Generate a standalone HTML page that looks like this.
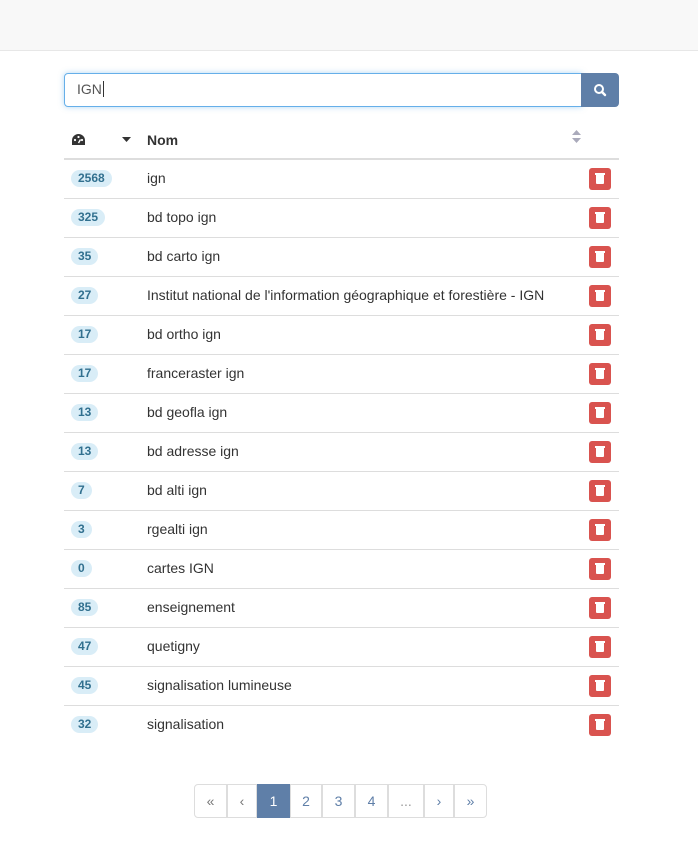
<!DOCTYPE html>
<html><head><meta charset="utf-8"><style>
*{box-sizing:border-box}
body{margin:0;width:698px;height:844px;background:#fff;font-family:"Liberation Sans",sans-serif;font-size:14px;color:#333;position:relative;overflow:hidden}
.hdr{position:absolute;left:0;top:0;width:698px;height:51px;background:#f8f8f8;border-bottom:1px solid #e7e7e7}
.inp{position:absolute;left:64px;top:73px;width:518px;height:34px;border:1px solid #66afe9;border-radius:4px 0 0 4px;box-shadow:0 0 6px rgba(102,175,233,.5);padding:7px 12px;font-size:14px;color:#555}
.btn{position:absolute;left:581px;top:73px;width:38px;height:34px;background:#5f7fa8;border-radius:0 4px 4px 0}
.th{position:absolute;left:64px;top:122px;width:555px;height:38px;border-bottom:2px solid #ddd}
.row{position:absolute;left:64px;width:555px;height:39px;border-bottom:1px solid #ddd}
.badge{position:absolute;left:7px;top:10px;height:17px;line-height:17px;padding:0 7px;border-radius:9px;background:#d9edf7;color:#31708f;font-weight:bold;font-size:12px}
.nm{position:absolute;left:83px;top:10px}
.tr{position:absolute;left:525px;top:8px;width:22px;height:22px;background:#d9534f;border-radius:3px}
.pg{position:absolute;top:784px;height:34px;border:1px solid #ddd;margin-left:-1px;text-align:center;line-height:32px;color:#5f7fa8;background:#fff}
.tr::after{content:"";position:absolute;left:7px;top:7px;width:8px;height:9px;background:#fff;border-radius:0 0 1px 1px}.tr::before{content:"";position:absolute;left:6px;top:5px;width:10px;height:2px;background:#fff}
</style></head><body>
<div class="hdr"></div>
<div class="inp">IGN<span style="border-left:1px solid #333;margin-left:1px"></span></div>
<div class="btn"><svg width="38" height="34" viewBox="0 0 38 34"><circle cx="18" cy="16" r="4" fill="none" stroke="#fff" stroke-width="2"/><line x1="21" y1="19" x2="24" y2="22" stroke="#fff" stroke-width="2.4" stroke-linecap="round"/></svg></div>
<div class="th">
<svg style="position:absolute;left:7px;top:11px" width="15" height="14" viewBox="0 0 15 14"><path d="M7.5 1A6.5 6.5 0 0 0 1 7.5V12h13V7.5A6.5 6.5 0 0 0 7.5 1z" fill="#333"/><circle cx="4" cy="7" r="1.1" fill="#fff"/><circle cx="7.5" cy="4" r="1.1" fill="#fff"/><circle cx="11" cy="7" r="1.1" fill="#fff"/><path d="M7.5 10l2-3.5" stroke="#fff" stroke-width="1.4"/></svg>
<svg style="position:absolute;left:58px;top:15px" width="9" height="5"><path d="M0 0h9L4.5 5z" fill="#333"/></svg>
<span style="position:absolute;left:83px;top:10px;font-weight:bold">Nom</span>
<svg style="position:absolute;left:508px;top:8px" width="9" height="13"><path d="M0 5h9L4.5 0zM0 8h9L4.5 13z" fill="#aab"/></svg>
</div>
<div class="row" style="top:160px"><span class="badge">2568</span><span class="nm">ign</span><span class="tr"></span></div>
<div class="row" style="top:199px"><span class="badge">325</span><span class="nm">bd topo ign</span><span class="tr"></span></div>
<div class="row" style="top:238px"><span class="badge">35</span><span class="nm">bd carto ign</span><span class="tr"></span></div>
<div class="row" style="top:277px"><span class="badge">27</span><span class="nm">Institut national de l'information géographique et forestière - IGN</span><span class="tr"></span></div>
<div class="row" style="top:316px"><span class="badge">17</span><span class="nm">bd ortho ign</span><span class="tr"></span></div>
<div class="row" style="top:355px"><span class="badge">17</span><span class="nm">franceraster ign</span><span class="tr"></span></div>
<div class="row" style="top:394px"><span class="badge">13</span><span class="nm">bd geofla ign</span><span class="tr"></span></div>
<div class="row" style="top:433px"><span class="badge">13</span><span class="nm">bd adresse ign</span><span class="tr"></span></div>
<div class="row" style="top:472px"><span class="badge">7</span><span class="nm">bd alti ign</span><span class="tr"></span></div>
<div class="row" style="top:511px"><span class="badge">3</span><span class="nm">rgealti ign</span><span class="tr"></span></div>
<div class="row" style="top:550px"><span class="badge">0</span><span class="nm">cartes IGN</span><span class="tr"></span></div>
<div class="row" style="top:589px"><span class="badge">85</span><span class="nm">enseignement</span><span class="tr"></span></div>
<div class="row" style="top:628px"><span class="badge">47</span><span class="nm">quetigny</span><span class="tr"></span></div>
<div class="row" style="top:667px"><span class="badge">45</span><span class="nm">signalisation lumineuse</span><span class="tr"></span></div>
<div class="row" style="top:706px;border-bottom:none"><span class="badge">32</span><span class="nm">signalisation</span><span class="tr"></span></div>
<div class="pg" style="left:195px;width:33px;border-radius:4px 0 0 4px;color:#777">«</div>
<div class="pg" style="left:228px;width:30px;color:#777">‹</div>
<div class="pg" style="left:258px;width:33px;background:#5f7fa8;border-color:#5f7fa8;color:#fff">1</div>
<div class="pg" style="left:291px;width:32px">2</div>
<div class="pg" style="left:323px;width:33px">3</div>
<div class="pg" style="left:356px;width:33px">4</div>
<div class="pg" style="left:389px;width:36px;color:#999">...</div>
<div class="pg" style="left:425px;width:30px">›</div>
<div class="pg" style="left:455px;width:33px;border-radius:0 4px 4px 0">»</div>
</body></html>
